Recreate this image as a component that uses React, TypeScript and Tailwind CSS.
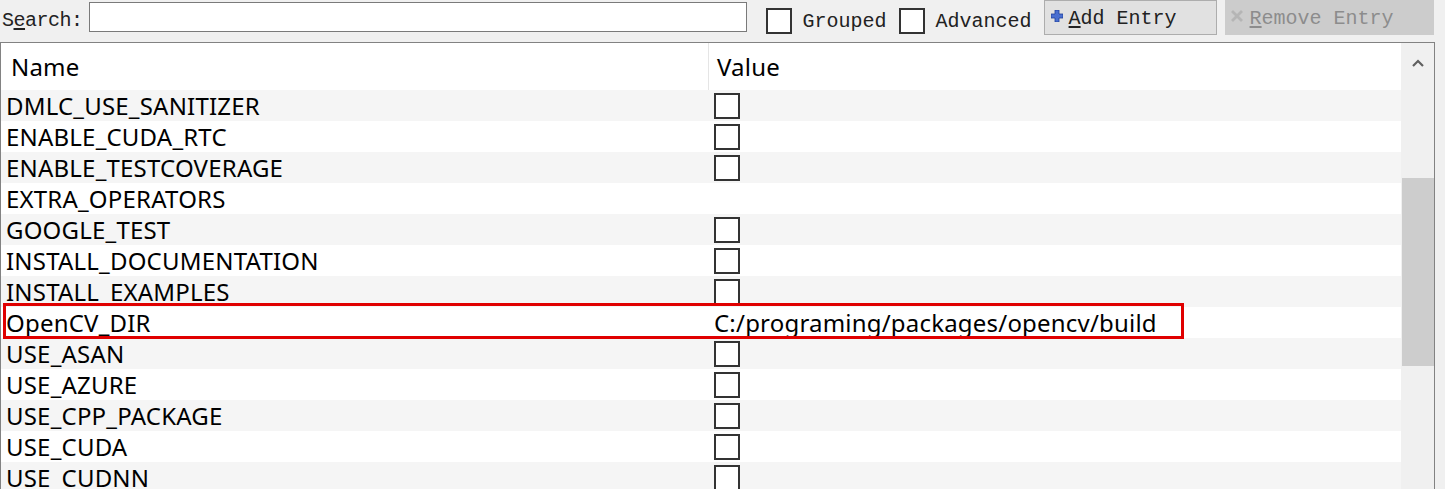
import React from "react";

type Row = { name: string; value?: string; highlight?: boolean };

const rows: Row[] = [
  { name: "DMLC_USE_SANITIZER" },
  { name: "ENABLE_CUDA_RTC" },
  { name: "ENABLE_TESTCOVERAGE" },
  { name: "EXTRA_OPERATORS", value: "" },
  { name: "GOOGLE_TEST" },
  { name: "INSTALL_DOCUMENTATION" },
  { name: "INSTALL_EXAMPLES" },
  { name: "OpenCV_DIR", value: "C:/programing/packages/opencv/build", highlight: true },
  { name: "USE_ASAN" },
  { name: "USE_AZURE" },
  { name: "USE_CPP_PACKAGE" },
  { name: "USE_CUDA" },
  { name: "USE_CUDNN" },
];

const mono = "font-['Liberation_Mono','DejaVu_Sans_Mono',monospace]";
const sans = "font-['Noto_Sans','Open_Sans',sans-serif]";

function Box() {
  return <div className="w-[26px] h-[26px] border-2 border-[#333] bg-white shrink-0" />;
}

export default function App() {
  return (
    <div className="w-[1445px] h-[489px] bg-[#f0f0f0] overflow-hidden">
      {/* toolbar */}
      <div className={`flex items-start h-[42px] text-[20px] text-[#222] ${mono}`}>
        <span className="mt-[6px] ml-[2px] tracking-[-0.5px]">
          S<span className="underline underline-offset-2">e</span>arch:
        </span>
        <div className="ml-[6px] mt-[2px] w-[658px] h-[30px] bg-white border border-[#7a7a7a]" />
        <div className="ml-[19px] mt-[5px] flex items-center">
          <Box />
          <span className="ml-[11px] mt-[2px]">Grouped</span>
        </div>
        <div className="ml-[12px] mt-[5px] flex items-center">
          <Box />
          <span className="ml-[11px] mt-[2px]">Advanced</span>
        </div>
        <div className="ml-[12px] h-[35px] w-[173px] bg-[#e1e1e1] border border-[#adadad] flex items-center pl-[6px] pt-[2px]">
          <svg width="12" height="12" viewBox="0 0 12 12" className="mr-[6px] -mt-[5px]">
            <path d="M4 0h4v4h4v4H8v4H4V8H0V4h4z" fill="#4a6fd0" stroke="#1f3f99" strokeWidth="0.8" />
          </svg>
          <span>
            <span className="underline underline-offset-2">A</span>dd Entry
          </span>
        </div>
        <div className="ml-[8px] h-[35px] w-[209px] bg-[#cccccc] flex items-center pl-[6px] pt-[2px] text-[#8c8c8c]">
          <svg width="12" height="12" viewBox="0 0 12 12" className="mr-[7px] -mt-[5px]">
            <path d="M2 0l4 4 4-4 2 2-4 4 4 4-2 2-4-4-4 4-2-2 4-4-4-4z" fill="#b5b5b5" />
          </svg>
          <span>
            <span className="underline underline-offset-2">R</span>emove Entry
          </span>
        </div>
      </div>

      {/* table */}
      <div className={`flex w-[1435px] h-[447px] border-t border-l border-r border-[#828282] bg-white ${sans}`}>
        <div className="flex-1 flex flex-col">
          <div className="flex h-[47px] shrink-0 text-[24px] tracking-[0.2px] text-black">
            <div className="w-[708px] pl-[10px] pt-[6px] border-r border-[#e5e5e5]">Name</div>
            <div className="pl-[8px] pt-[6px]">Value</div>
          </div>
          {rows.map((r, i) => (
            <div
              key={r.name}
              className={`flex h-[31px] shrink-0 items-center text-[24px] tracking-[0.2px] text-black leading-none ${
                i % 2 === 0 ? "bg-[#f5f5f5]" : "bg-white"
              } ${r.highlight ? "relative" : ""}`}
            >
              <div className="w-[708px] pl-[5px] whitespace-nowrap">{r.name}</div>
              <div className="pl-[5px] whitespace-nowrap">
                {r.value === undefined ? <Box /> : r.value}
              </div>
              {r.highlight && (
                <div className="absolute left-[2px] top-[-4px] w-[1181px] h-[36px] border-[3px] border-[#e00000]" />
              )}
            </div>
          ))}
        </div>
        {/* scrollbar */}
        <div className="w-[33px] bg-[#f0f0f0] flex flex-col">
          <div className="h-[40px] flex items-center justify-center">
            <svg width="14" height="10" viewBox="0 0 14 10">
              <path d="M2 8l5-5 5 5" fill="none" stroke="#606060" strokeWidth="2.2" />
            </svg>
          </div>
          <div className="h-[95px]" />
          <div className="h-[188px] bg-[#cdcdcd] ml-[1px]" />
        </div>
      </div>
    </div>
  );
}
